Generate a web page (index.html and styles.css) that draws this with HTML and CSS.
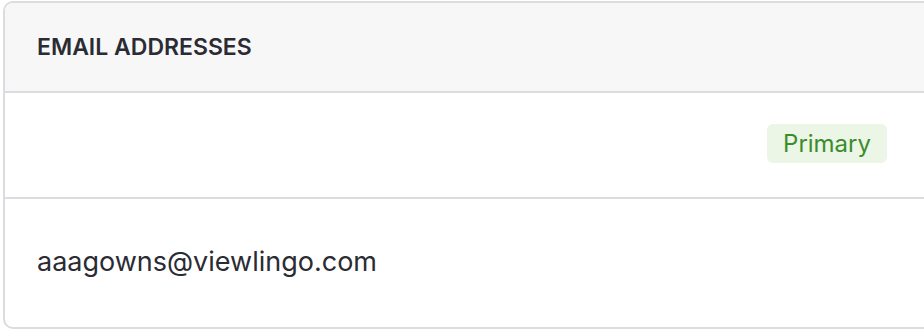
FILE: index.html
```html
<!DOCTYPE html>
<html>
<head>
<meta charset="utf-8">
<link rel="stylesheet" href="styles.css">
</head>
<body>
<div class="page">
  <section class="card">
    <header class="card-header">EMAIL ADDRESSES</header>
    <div class="row row-badge"><span class="badge">Primary</span></div>
    <div class="row row-email">aaagowns@viewlingo.com</div>
  </section>
</div>
</body>
</html>
```

FILE: styles.css
```css
html, body { margin: 0; padding: 0; background: #fff; overflow: hidden; }
.page { padding: 1px 0 0 3px; width: 1000px; }
.card {
  width: 960px;
  border: 2px solid #dcdce0;
  border-radius: 10px;
  overflow: hidden;
  font-family: Inter, "Noto Sans", sans-serif;
  color: #2b2b33;
  box-sizing: border-box;
}
.card-header {
  background: #f7f7f7;
  height: 88px;
  display: flex;
  align-items: center;
  padding-left: 32px;
  font-size: 23px;
  font-weight: 600;
  border-bottom: 2px solid #dcdce0;
}
.row { display: flex; align-items: center; box-sizing: border-box; }
.row-badge {
  height: 106px;
  justify-content: flex-end;
  padding-right: 74px;
  padding-bottom: 3px;
  border-bottom: 2px solid #dcdce0;
}
.badge {
  background: #ebf6e7;
  color: #3b8c2c;
  font-size: 24px;
  padding: 0 16px;
  height: 39px;
  display: flex;
  align-items: center;
  border-radius: 6px;
}
.row-email {
  height: 128px;
  padding-left: 32px;
  padding-bottom: 4px;
  font-size: 27px;
}
```
